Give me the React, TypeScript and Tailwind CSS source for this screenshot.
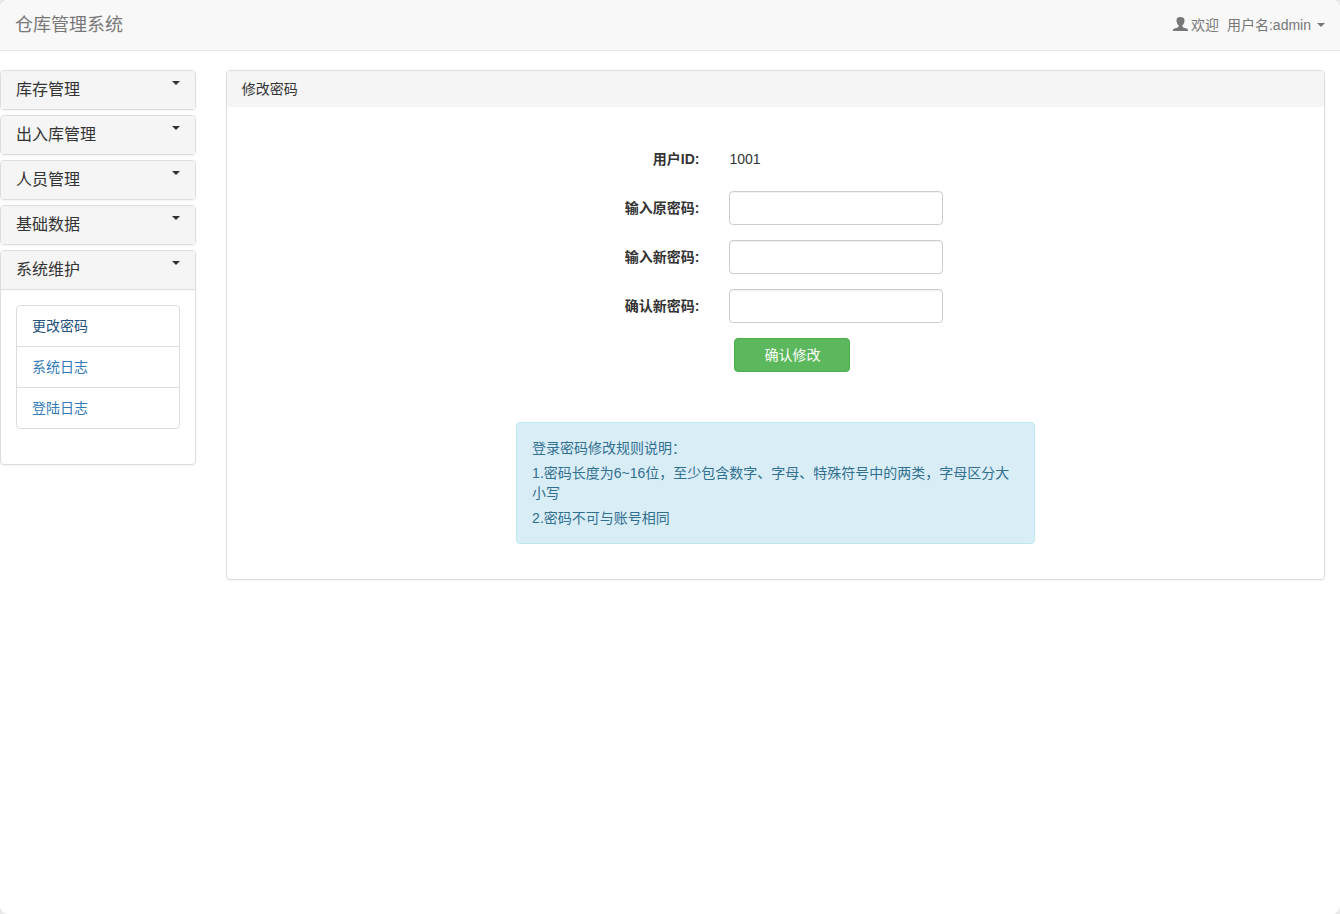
import { useState } from "react";
import type { FormEvent } from "react";

const menus = ["库存管理", "出入库管理", "人员管理", "基础数据", "系统维护"];

const links = ["更改密码", "系统日志", "登陆日志"];

const fields = [
  { id: "oldPassword", label: "输入原密码:" },
  { id: "newPassword", label: "输入新密码:" },
  { id: "confirmPassword", label: "确认新密码:" },
];

function Caret() {
  return (
    <span className="inline-block border-x-4 border-t-4 border-x-transparent border-t-current" />
  );
}

function UserIcon() {
  return (
    <svg viewBox="0 0 15 16" className="w-[15px] h-4 fill-current" aria-hidden="true">
      <path d="M7.5 0C10 0 11.5 1.1 11.5 3.2C11.5 4.2 11.4 5 11.1 5.7C10.8 6.7 10.2 7.6 9.4 8.2V9.2C9.4 9.8 9.8 10.1 10.5 10.4L13.4 11.5C14.5 11.9 15 12.3 15 13.2V14H0V13.2C0 12.3 .5 11.9 1.6 11.5L4.5 10.4C5.2 10.1 5.6 9.8 5.6 9.2V8.2C4.8 7.6 4.2 6.7 3.9 5.7C3.6 5 3.5 4.2 3.5 3.2C3.5 1.1 5 0 7.5 0Z" />
    </svg>
  );
}

function Navbar() {
  return (
    <header className="flex items-center justify-between px-[15px] h-[51px] bg-[#f8f8f8] border-b border-[#e7e7e7] text-[#777]">
      <a href="#" className="text-lg leading-5">
        仓库管理系统
      </a>
      <button type="button" className="flex items-center leading-5">
        <UserIcon />
        <span className="ml-[3px]">欢迎</span>
        <span className="ml-2">用户名:admin</span>
        <span className="ml-1.5 flex">
          <Caret />
        </span>
      </button>
    </header>
  );
}

function Sidebar() {
  const [open, setOpen] = useState("系统维护");

  return (
    <nav className="w-1/6 px-[15px]">
      <div className="flex flex-col gap-[5px]">
        {menus.map((menu) => (
          <div key={menu} className="bg-white border border-[#ddd] rounded shadow-xs">
            <button
              type="button"
              onClick={() => setOpen(menu)}
              className="flex items-start justify-between w-full px-[15px] py-2.5 bg-[#f5f5f5] rounded-t-[3px] text-base leading-[18px]"
            >
              {menu}
              <Caret />
            </button>
            {open === menu && (
              <div className="border-t border-[#ddd] px-[15px] pt-[15px] pb-[35px]">
                <ul className="border border-[#ddd] rounded divide-y divide-[#ddd]">
                  {links.map((link, i) => (
                    <li key={link}>
                      <a
                        href="#"
                        className={
                          i === 0
                            ? "block px-[15px] py-2.5 text-[#23527c]"
                            : "block px-[15px] py-2.5 text-[#337ab7]"
                        }
                      >
                        {link}
                      </a>
                    </li>
                  ))}
                </ul>
              </div>
            )}
          </div>
        ))}
      </div>
    </nav>
  );
}

function PasswordForm() {
  const onSubmit = (e: FormEvent) => {
    e.preventDefault();
  };

  return (
    <form onSubmit={onSubmit} className="w-1/3 mx-auto flex flex-col gap-[15px]">
      <div className="flex items-center h-[34px]">
        <span className="w-1/3 pr-[15px] text-right font-bold">用户ID:</span>
        <span className="w-2/3 px-[15px]">1001</span>
      </div>
      {fields.map((field) => (
        <div key={field.id} className="flex items-center">
          <label htmlFor={field.id} className="w-1/3 pr-[15px] text-right font-bold">
            {field.label}
          </label>
          <div className="w-2/3 px-[15px]">
            <input
              id={field.id}
              type="password"
              className="block w-full h-[34px] px-3 border border-[#ccc] rounded inset-shadow-2xs outline-none focus:border-[#66afe9]"
            />
          </div>
        </div>
      ))}
      <div className="flex">
        <div className="w-2/3 ml-auto px-5">
          <button
            type="submit"
            className="h-[34px] px-[29px] bg-[#5cb85c] border border-[#4cae4c] rounded text-white hover:bg-[#449d44]"
          >
            确认修改
          </button>
        </div>
      </div>
    </form>
  );
}

export default function App() {
  return (
    <div className="min-h-screen bg-[#e8e8e8] font-['Liberation_Sans','Noto_Sans_CJK_SC',sans-serif] text-sm leading-5 text-[#333]">
      <div className="min-h-screen bg-white rounded-lg overflow-hidden">
        <Navbar />
        <div className="flex items-start mt-[19px] -ml-[15px]">
          <Sidebar />
          <main className="w-5/6 px-[15px]">
            <section className="border border-[#ddd] rounded shadow-xs">
              <h1 className="px-[15px] py-2 bg-[#f5f5f5] rounded-[3px]">修改密码</h1>
              <div className="py-[35px]">
                <PasswordForm />
                <div className="w-1/2 mx-auto mt-[50px] px-[15px]">
                  <div className="flex flex-col gap-[5px] p-[15px] bg-[#d9edf7] border border-[#bce8f1] rounded text-[#31708f]">
                    <p>登录密码修改规则说明：</p>
                    <p>1.密码长度为6~16位，至少包含数字、字母、特殊符号中的两类，字母区分大小写</p>
                    <p>2.密码不可与账号相同</p>
                  </div>
                </div>
              </div>
            </section>
          </main>
        </div>
      </div>
    </div>
  );
}
